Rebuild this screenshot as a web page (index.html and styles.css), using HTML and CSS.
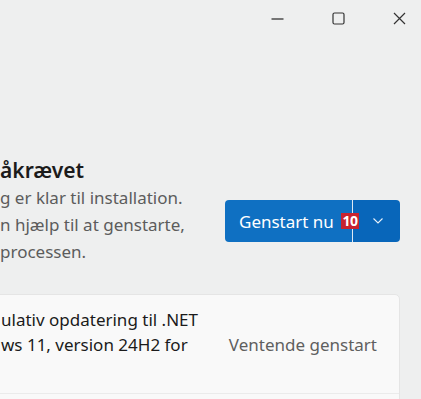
FILE: index.html
```html
<!DOCTYPE html>
<html lang="da">
<head>
    <meta charset="UTF-8">
    <title>Windows Update</title>
    <link rel="stylesheet" href="styles.css">
</head>
<body>
    <!-- Titellinje -->
    <div class="titlebar">
        <svg class="win-icon" width="13" height="13" viewBox="0 0 13 13"><path d="M0.5 7h12" stroke="#333" stroke-width="1.3" fill="none"/></svg>
        <svg class="win-icon" width="13" height="13" viewBox="0 0 13 13"><rect x="1" y="1" width="11" height="11" rx="1.5" stroke="#333" stroke-width="1.2" fill="none"/></svg>
        <svg class="win-icon" width="13" height="13" viewBox="0 0 13 13"><path d="M1 1l11 11M12 1L1 12" stroke="#333" stroke-width="1.2" fill="none"/></svg>
    </div>

    <div class="content">
        <!-- Genstart påkrævet -->
        <div class="restart-row">
            <div class="restart-text">
                <h2>åkrævet</h2>
                <p>g er klar til installation.<br>n hjælp til at genstarte,<br>processen.</p>
            </div>
            <div class="split-button">
                <button class="split-main">Genstart nu</button>
                <button class="split-arrow">
                    <svg width="10" height="6" viewBox="0 0 10 6"><path d="M0.5 0.5l4.5 4.5 4.5-4.5" stroke="#e6f0fa" stroke-width="1.1" fill="none"/></svg>
                </button>
                <span class="badge">10</span>
            </div>
        </div>

        <!-- Opdateringsliste -->
        <div class="update-card">
            <div class="update-item">
                <div class="update-name">ulativ opdatering til .NET<br>ws 11, version 24H2 for</div>
                <div class="update-status">Ventende genstart</div>
            </div>
            <div class="update-item next"></div>
        </div>
    </div>
</body>
</html>
```

FILE: styles.css
```css
body {
    font-family: "Noto Sans", "Open Sans", sans-serif;
    background-color: #eeefef;
    margin: 0;
    padding: 0;
    height: 399px;
    overflow: hidden;
}

.titlebar {
    display: flex;
    justify-content: flex-end;
    gap: 48px;
    padding: 12px 15px 0 0;
    height: 28px;
}

.win-icon {
    display: block;
}

.content {
    padding: 116px 21px 0 0;
}

.restart-row {
    display: flex;
    justify-content: space-between;
    align-items: flex-start;
}

.restart-text h2 {
    margin: 0;
    font-size: 21px;
    font-weight: 600;
    line-height: 28px;
    color: #1b1b1b;
}

.restart-text p {
    margin: 0;
    font-size: 17px;
    line-height: 27px;
    color: #5c5c5c;
}

.split-button {
    position: relative;
    display: flex;
    margin-top: 44px;
    height: 42px;
    border-radius: 4px;
    overflow: hidden;
}

.split-button button {
    border: none;
    color: #ffffff;
    font-family: inherit;
    cursor: pointer;
}

.split-main {
    width: 128px;
    padding: 0 0 0 14px;
    text-align: left;
    font-size: 17px;
    background-color: #0f70c2;
    border-right: 1px solid #dfe9f3 !important;
}

.split-arrow {
    width: 47px;
    background-color: #0866ba;
    display: flex;
    align-items: center;
    justify-content: center;
    padding: 0 0 0 2px;
}

.badge {
    position: absolute;
    left: 116px;
    top: 13px;
    width: 18px;
    height: 16px;
    background-color: #c8232f;
    color: #ffffff;
    font-size: 14px;
    font-weight: 700;
    line-height: 16px;
    text-align: center;
    letter-spacing: -0.5px;
}

.update-card {
    margin-top: 29px;
    margin-left: -10px;
    background-color: #f9f9f9;
    border: 1px solid #e5e5e5;
    border-radius: 5px;
}

.update-item {
    display: flex;
    align-items: center;
    height: 98px;
    padding: 0 22px 0 10px;
}

.update-item.next {
    border-top: 1px solid #ebebeb;
}

.update-name {
    flex: 1;
    min-height: 75px;
    font-size: 17px;
    line-height: 25px;
    color: #1b1b1b;
}

.update-status {
    font-size: 17px;
    color: #5f5f5f;
}
```
